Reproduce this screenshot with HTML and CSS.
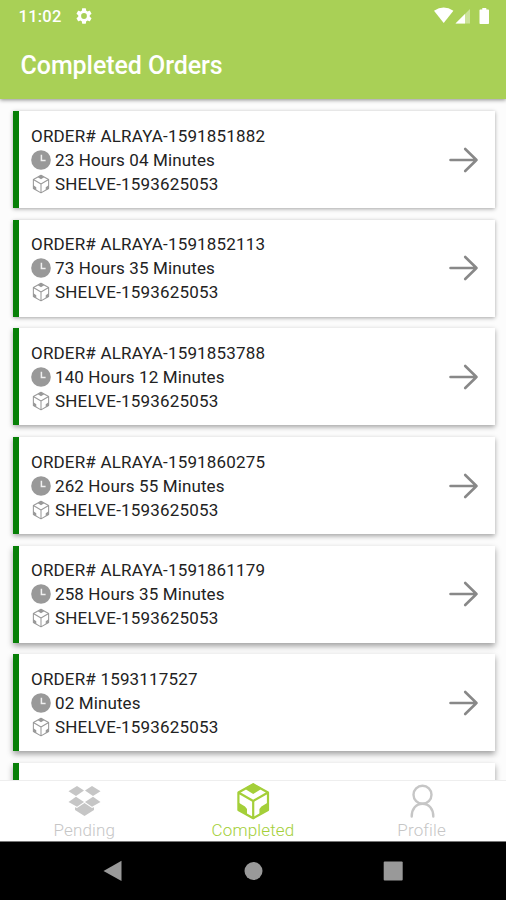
FILE: index.html
```html
<!DOCTYPE html>
<html lang="en">
<head>
<meta charset="utf-8">
<title>Completed Orders</title>
<link rel="stylesheet" href="styles.css">
</head>
<body>
<svg class="defs" aria-hidden="true">
  <symbol id="box" viewBox="0 0 34 38">
    <path d="M17.200 2.200 32 10.500V28L17.200 36.300 2.400 28V10.500Z M2.400 10.500 17.200 19 32 10.500 M17.200 19V36" fill="none" stroke="currentColor" stroke-width="2.200" stroke-linejoin="round"/>
    <path d="M17.200 1.500 24.500 5.600V7.500L17.200 12 10 7.500V5.600Z M2 20.300 9 24.500 11 27V33.200L2 28Z M32.400 20.300 25.400 24.500 23.400 27V33.200L32.400 28Z" fill="currentColor"/>
  </symbol>
  <symbol id="box-line" viewBox="0 0 34 38">
    <path d="M17 2.500 31.500 10.500V27.500L17 35.800 2.500 27.500V10.500Z M2.500 10.500 17 19 31.500 10.500 M17 19V36" fill="none" stroke="currentColor" stroke-width="2" stroke-linejoin="round"/>
    <path d="M17 2 23 6 17 10 11 6Z M2 21 8 25V31L2 27.500Z M32 21 26 25V31L32 27.500Z" fill="currentColor"/>
  </symbol>
  <symbol id="clock" viewBox="0 0 20 20">
    <circle cx="10" cy="10" r="9.8" fill="currentColor"/>
    <path d="M10.4 4.7V10.4H14.6" fill="none" stroke="#f0f0f0" stroke-width="1.500"/>
  </symbol>
  <symbol id="arrow" viewBox="0 0 30 26">
    <path d="M1.500 13H27.500M16.200 2 27.500 13 16.200 24" fill="none" stroke="currentColor" stroke-width="2.600" stroke-linecap="round" stroke-linejoin="round"/>
  </symbol>
</svg>
<div class="screen">
  <header class="top">
    <div class="status">
      <span class="time">11:02</span>
      <svg class="gear" viewBox="2 2 20 20"><path fill="#fff" d="M19.14 12.94c.04-.3.06-.61.06-.94s-.02-.64-.07-.94l2.03-1.58a.49.49 0 0 0 .12-.61l-1.92-3.32a.49.49 0 0 0-.59-.22l-2.39.96c-.5-.38-1.03-.7-1.62-.94l-.36-2.54A.48.48 0 0 0 13.92 2.4h-3.84c-.24 0-.43.17-.47.41l-.36 2.54c-.59.24-1.13.57-1.62.94l-2.39-.96a.48.48 0 0 0-.59.22L2.74 8.87a.47.47 0 0 0 .12.61l2.03 1.58c-.05.3-.09.63-.09.94s.02.64.07.94l-2.03 1.58a.49.49 0 0 0-.12.61l1.92 3.32c.12.22.37.29.59.22l2.39-.96c.5.38 1.03.7 1.62.94l.36 2.54c.05.24.24.41.48.41h3.84c.24 0 .44-.17.47-.41l.36-2.54c.59-.24 1.13-.56 1.62-.94l2.39.96c.22.08.47 0 .59-.22l1.92-3.32a.47.47 0 0 0-.12-.61zM12 15.6a3.6 3.6 0 1 1 0-7.2 3.6 3.6 0 0 1 0 7.2z"/></svg>
      <svg class="signals" viewBox="0 0 56 18">
        <path d="M0 3.8Q9.700-3 19.400 3.800L9.700 16Z" fill="#fff"/>
        <path d="M21.500 16.500 36 2V16.500Z" fill="#cbe29b"/>
        <path d="M21.500 16.500 31 7V16.500Z" fill="#fff"/>
        <path d="M45.500 3.300Q45.500 2.500 46.300 2.500H48.300V1H52.300V2.500H54.200Q55 2.500 55 3.300V16.200Q55 17 54.200 17H46.300Q45.500 17 45.500 16.200Z" fill="#fff"/>
      </svg>
    </div>
    <h1>Completed Orders</h1>
  </header>
  <main class="list">
    <article class="card"><div class="info"><p>ORDER# ALRAYA-1591851882</p><p><svg><use href="#clock"/></svg>23 Hours 04 Minutes</p><p><svg><use href="#box-line"/></svg>SHELVE-1593625053</p></div><svg class="go"><use href="#arrow"/></svg></article>
    <article class="card"><div class="info"><p>ORDER# ALRAYA-1591852113</p><p><svg><use href="#clock"/></svg>73 Hours 35 Minutes</p><p><svg><use href="#box-line"/></svg>SHELVE-1593625053</p></div><svg class="go"><use href="#arrow"/></svg></article>
    <article class="card"><div class="info"><p>ORDER# ALRAYA-1591853788</p><p><svg><use href="#clock"/></svg>140 Hours 12 Minutes</p><p><svg><use href="#box-line"/></svg>SHELVE-1593625053</p></div><svg class="go"><use href="#arrow"/></svg></article>
    <article class="card"><div class="info"><p>ORDER# ALRAYA-1591860275</p><p><svg><use href="#clock"/></svg>262 Hours 55 Minutes</p><p><svg><use href="#box-line"/></svg>SHELVE-1593625053</p></div><svg class="go"><use href="#arrow"/></svg></article>
    <article class="card"><div class="info"><p>ORDER# ALRAYA-1591861179</p><p><svg><use href="#clock"/></svg>258 Hours 35 Minutes</p><p><svg><use href="#box-line"/></svg>SHELVE-1593625053</p></div><svg class="go"><use href="#arrow"/></svg></article>
    <article class="card"><div class="info"><p>ORDER# 1593117527</p><p><svg><use href="#clock"/></svg>02 Minutes</p><p><svg><use href="#box-line"/></svg>SHELVE-1593625053</p></div><svg class="go"><use href="#arrow"/></svg></article>
    <article class="card"></article>
  </main>
  <nav class="tabs">
    <a class="tab"><svg viewBox="0 0 34 38"><g fill="currentColor"><path d="M10 4 17 8.500 9 14 1.500 9.300Z"/><path d="M25 4 18 8.500 26 14 33.500 9.300Z"/><path d="M9 14.800 17 20 10 24.800 1.500 20Z"/><path d="M26 14.800 18 20 25 24.800 33.500 20Z"/><path d="M17.500 21 25 26 27 25.200V28L17.500 34 8 28V25.200L10 26Z"/></g></svg><span>Pending</span></a>
    <a class="tab active"><svg><use href="#box"/></svg><span>Completed</span></a>
    <a class="tab"><svg viewBox="0 0 34 38"><g fill="none" stroke="currentColor" stroke-width="2.400" stroke-linecap="round"><circle cx="17.500" cy="12.800" r="9"/><path d="M6.700 34.500C6.700 27 11 21.800 17.500 21.800S28.300 27 28.300 34.500"/></g></svg><span>Profile</span></a>
  </nav>
  <footer class="system">
    <svg viewBox="0 0 20 22"><path d="M.5 11 18.500 .8V21Z" fill="#999"/></svg>
    <svg viewBox="0 0 20 22"><circle cx="10.500" cy="11" r="9" fill="#999"/></svg>
    <svg viewBox="0 0 20 22"><rect x=".7" y="1.500" width="19" height="19" rx="1" fill="#999"/></svg>
  </footer>
</div>
</body>
</html>
```
FILE: styles.css
```css
* { box-sizing: border-box; }
body { margin: 0; font-family: Roboto, "Liberation Sans", sans-serif; }
h1, p { margin: 0; }
.defs { display: none; }
.screen { width: 506px; height: 900px; display: flex; flex-direction: column; overflow: hidden; background: #fff; }
.top { flex: none; height: 99px; background: #a9d056; color: #fff; z-index: 1; box-shadow: 0 1px 4px rgba(0,0,0,.45); }
.status { height: 32px; padding: 0 16.500px 0 18.500px; display: flex; align-items: center; }
.time { font-size: 16.5px; font-weight: 500; letter-spacing: .25px; }
.gear { width: 16px; height: 16px; margin-left: 14px; margin-top: -1px; }
.signals { width: 56px; height: 18px; margin-left: auto; margin-top: -1px; }
h1 { padding-left: 20.500px; font-size: 25px; line-height: 68px; font-weight: 500; letter-spacing: -.06px; }
.list { flex: 1; min-height: 0; overflow: hidden; padding: 12px 11px 0 12.500px; display: flex; flex-direction: column; gap: 11.700px; background: #fcfcfc; }
.card { flex: none; height: 97px; display: flex; align-items: center; justify-content: space-between; padding: 0 16px 0 12.500px; border-left: 6px solid #078007; background: #fff; box-shadow: 0 1px 4px rgba(0,0,0,.35); }
.card:nth-child(n+3) { box-shadow: 0 2px 5px rgba(0,0,0,.36); }
.card:nth-child(n+5) { box-shadow: 0 3px 6px rgba(0,0,0,.38); }
.info { color: #222; font-size: 17px; }
.info p { height: 24px; line-height: 24px; display: flex; align-items: center; gap: 4px; white-space: nowrap; letter-spacing: .18px; }
.info p:nth-child(2) { letter-spacing: .12px; }
.info svg { width: 20px; height: 20px; color: #999; flex: none; }
.go { width: 30px; height: 26px; color: #888; }
.tabs { flex: none; height: 61px; display: grid; grid-template-columns: repeat(3, 1fr); background: #fff; border-top: 1px solid #eee; z-index: 1; }
.tab { display: flex; flex-direction: column; align-items: center; color: #c6c6c6; }
.tab svg { width: 34px; height: 38px; margin-top: 1px; }
.tab span { font-size: 17px; line-height: 20px; font-weight: 300; letter-spacing: .15px; }
.tab.active { color: #a4cf39; }
.system { flex: none; height: 59px; background: #000; border-top: 1px solid #777; display: flex; justify-content: center; align-items: center; gap: 120px; }
.system svg { width: 20px; height: 22px; }
```
